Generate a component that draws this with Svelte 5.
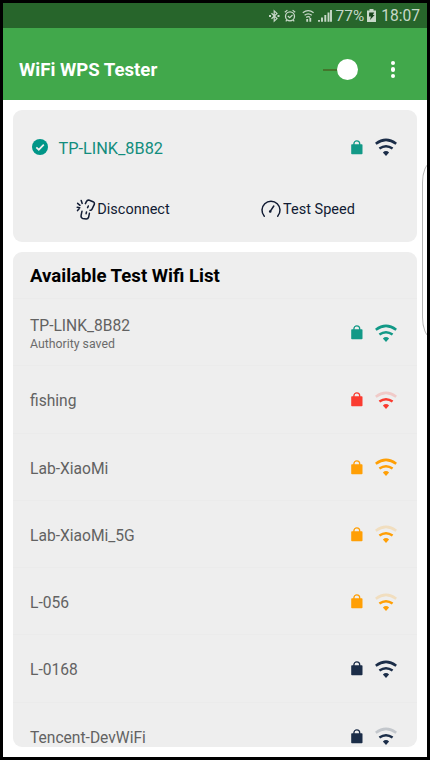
<script lang="ts">
  type Network = {
    name: string;
    note?: string;
    color: string;
    weak?: boolean;
  };

  const networks: Network[] = [
    { name: 'TP-LINK_8B82', note: 'Authority saved', color: '#129987' },
    { name: 'fishing', color: '#fa3b30', weak: true },
    { name: 'Lab-XiaoMi', color: '#ff9f05' },
    { name: 'Lab-XiaoMi_5G', color: '#ff9f05', weak: true },
    { name: 'L-056', color: '#ff9f05', weak: true },
    { name: 'L-0168', color: '#1b2d48' },
    { name: 'Tencent-DevWiFi', color: '#1b2d48', weak: true }
  ];

  let enabled = $state(true);
</script>

{#snippet lock(color: string)}
  <svg class="lock" viewBox="0 0 12 15" style:color>
    <path d="M2.9 5V3.8a2.9 2.9 0 0 1 5.8 0V5" fill="none" stroke="currentColor" stroke-width="1.3" />
    <rect x="0.2" y="4.3" width="11.3" height="10" rx="0.8" fill="currentColor" />
  </svg>
{/snippet}

{#snippet wifi(color: string, weak: boolean)}
  <svg class="wifi" viewBox="0 0 22 18" style:color>
    <g fill="none" stroke="currentColor" stroke-width="2.5">
      <path d="M0.8 5.7Q11-1.9 21.2 5.7" opacity={weak ? 0.2 : 1} />
      <path d="M4.4 10.6Q11 5.8 17.6 10.6" />
    </g>
    <path d="M7.9 14.4Q11 11.7 14.1 14.4L11 17.9z" fill="currentColor" />
  </svg>
{/snippet}

<div class="phone">
  <div class="status">
    <svg class="status-icons" viewBox="0 0 66 14" fill="none" stroke="currentColor">
      <path d="M3.5 4.2L9 9.6 6.2 12.2V1.8L9 4.4 3.5 9.8" stroke-width="1.2" />
      <path d="M1 7h2M9.5 7h2" stroke-width="1.8" />
      <circle cx="22" cy="7.3" r="4.5" stroke-width="1.3" />
      <path d="M19.8 7l1.9 1.7 2.8-2.7M16.8 3.3l2.6-2.2M27.2 3.3l-2.6-2.2M18.8 11l-1 1.4M25.2 11l1 1.4" stroke-width="1.2" />
      <path d="M34.8 3.8Q40.2-0.4 45.6 3.8M36.6 6.2Q40.2 3.4 43.8 6.2M38.2 8.4Q40.2 7 42.2 8.4" stroke-width="1.3" />
      <path d="M39.2 10v2.8M42.3 9v3.8" stroke-width="1.8" />
      <path d="M51 11v1.8M54 8.5v4.3M57.3 6v6.8M60.5 3.5v9.3M63 1v11.8" stroke-width="1.9" />
    </svg>
    <span class="percent">77%</span>
    <svg class="battery" viewBox="0 0 9 13">
      <path d="M2.5 0h4v1.4H9V13H0V1.4h2.5z" fill="currentColor" />
      <path d="M2.2 3.5h5L5.8 6h1.8L3 11l.9-3.5H2z" fill="#18451c" />
    </svg>
    <span class="clock">18:07</span>
  </div>

  <header>
    <h1>WiFi WPS Tester</h1>
    <button class="switch" class:off={!enabled} aria-label="WiFi" onclick={() => (enabled = !enabled)}>
      <span class="track"></span>
      <span class="thumb"></span>
    </button>
    <button class="more" aria-label="More">
      <span></span><span></span><span></span>
    </button>
  </header>

  <main>
    <section class="card current">
      <div class="connected">
        <svg class="check" viewBox="0 0 16 16">
          <circle cx="8" cy="8" r="8" fill="#009688" />
          <path d="M4.3 8.3l2.5 2.4 5-5" fill="none" stroke="#eee" stroke-width="1.7" />
        </svg>
        <span class="ssid">TP-LINK_8B82</span>
        {@render lock('#129987')}
        {@render wifi('#1b2d48', false)}
      </div>
      <div class="actions">
        <button class="action">
          <svg class="unlink" viewBox="0 0 20 21" fill="none" stroke="currentColor" stroke-width="1.5" stroke-linecap="round">
            <path d="M9.4 4.6l1-2Q11.4.6 13.4 1.3l3.6 1.4q2 1 1.2 3l-2.3 4.6q-.6 1.2-1.9 1M12.3 7l-.7 1.6" />
            <path d="M6 12.2l-.9 4.2q-.4 2.5 1.6 3l3.6.6q1.8 0 2.3-1.7l.8-4M10.5 13l-.4 1.7" />
            <path d="M5.2 1.4l1 3M1.6 4.3l2.4 2M1.2 8.3l2.6.4M3 9.9l-1.5 1.7" />
          </svg>
          Disconnect
        </button>
        <button class="action">
          <svg class="gauge" viewBox="0 0 20 18" fill="none" stroke="currentColor" stroke-width="1.5" stroke-linecap="round">
            <path d="M3.3 16.2A9 9 0 1 1 16.7 16.2" />
            <path d="M9.2 11.4L12.8 6" />
            <circle cx="9.2" cy="11.5" r="0.6" />
          </svg>
          Test Speed
        </button>
      </div>
    </section>

    <section class="card available">
      <h2>Available Test Wifi List</h2>
      <ul>
        {#each networks as network}
          <li>
            <div class="label">
              <span class="name">{network.name}</span>
              {#if network.note}
                <span class="note">{network.note}</span>
              {/if}
            </div>
            {@render lock(network.color)}
            {@render wifi(network.color, network.weak ?? false)}
          </li>
        {/each}
      </ul>
    </section>
  </main>

  <div class="edge-handle"></div>
</div>

<style>
  :global(body) {
    background: #000;
  }

  .phone {
    position: relative;
    display: flex;
    flex-direction: column;
    box-sizing: border-box;
    width: 430px;
    height: 760px;
    border: 3px solid #000;
    overflow: hidden;
    background: #fff;
    font-family: Roboto, 'Liberation Sans', sans-serif;
  }

  .status {
    display: flex;
    align-items: center;
    justify-content: flex-end;
    flex: 0 0 25px;
    padding-right: 7px;
    background: #27652b;
    color: #c8d8c9;
    font-size: 15.6px;
  }

  .status-icons {
    width: 66px;
    height: 14px;
    margin-right: 2px;
  }

  .percent {
    font-size: 15.4px;
  }

  .battery {
    width: 9px;
    height: 13px;
    margin: 0 5px 0 3px;
  }

  header {
    display: flex;
    align-items: center;
    flex: 0 0 72px;
    box-sizing: border-box;
    padding: 11px 32px 0 16px;
    background: #41a84b;
    color: #fff;
  }

  h1 {
    flex: 1;
    margin: 0;
    font-size: 18.6px;
    font-weight: 700;
    line-height: 24px;
  }

  button {
    padding: 0;
    border: 0;
    background: none;
    color: inherit;
    font: inherit;
    cursor: pointer;
  }

  .switch {
    display: flex;
    align-items: center;
  }

  .switch.off {
    flex-direction: row-reverse;
  }

  .track {
    width: 14px;
    height: 2px;
    background: #44762c;
  }

  .thumb {
    width: 21px;
    height: 21px;
    border-radius: 50%;
    background: #fff;
  }

  .more {
    display: flex;
    flex-direction: column;
    gap: 2px;
    margin-left: 33px;
  }

  .more span {
    width: 4.4px;
    height: 4.4px;
    border-radius: 50%;
    background: #fff;
  }

  main {
    display: flex;
    flex-direction: column;
    flex: 1;
    gap: 10px;
    min-height: 0;
    padding: 10px;
  }

  .card {
    border-radius: 9px;
    background: #eee;
    overflow: hidden;
  }

  .current {
    flex: 0 0 132px;
  }

  .connected {
    display: flex;
    align-items: center;
    height: 74px;
    padding: 0 20px 0 19px;
  }

  .check {
    width: 16px;
    height: 16px;
    margin-right: 10.5px;
  }

  .ssid {
    flex: 1;
    padding-top: 2px;
    color: #128d7d;
    font-size: 16.3px;
  }

  .lock {
    flex: none;
    width: 12px;
    height: 15px;
    margin-right: 12px;
  }

  .wifi {
    flex: none;
    width: 22px;
    height: 18px;
  }

  .actions {
    display: grid;
    grid-template-columns: 220px 1fr;
    height: 50px;
    color: #111b33;
    font-size: 14.5px;
  }

  .action {
    display: flex;
    align-items: center;
    justify-content: center;
  }

  .action:last-child {
    padding-right: 34px;
  }

  .unlink {
    width: 20px;
    height: 21px;
    margin-right: 1px;
  }

  .gauge {
    width: 20px;
    height: 18px;
    margin-right: 2px;
  }

  .available {
    flex: 1;
    min-height: 0;
  }

  h2 {
    margin: 0;
    padding: 12px 17px 10px;
    color: #000;
    font-size: 18.6px;
    font-weight: 700;
    line-height: 24px;
  }

  ul {
    margin: 0;
    padding: 0;
    list-style: none;
  }

  li {
    display: flex;
    align-items: center;
    box-sizing: border-box;
    height: 67.25px;
    padding: 1px 20px 0 17px;
    border-top: 1px solid #ebebeb;
  }

  .label {
    display: flex;
    flex-direction: column;
    flex: 1;
    padding-top: 3px;
  }

  .name {
    color: #626262;
    font-size: 15.6px;
    line-height: 20px;
  }

  .note {
    color: #6b6b6b;
    font-size: 12.3px;
    line-height: 17px;
  }

  .edge-handle {
    position: absolute;
    top: 160px;
    right: -12px;
    width: 17px;
    height: 174px;
    border: 1px solid #b5b5b5;
    border-radius: 12px / 28px;
    box-sizing: border-box;
  }
</style>
